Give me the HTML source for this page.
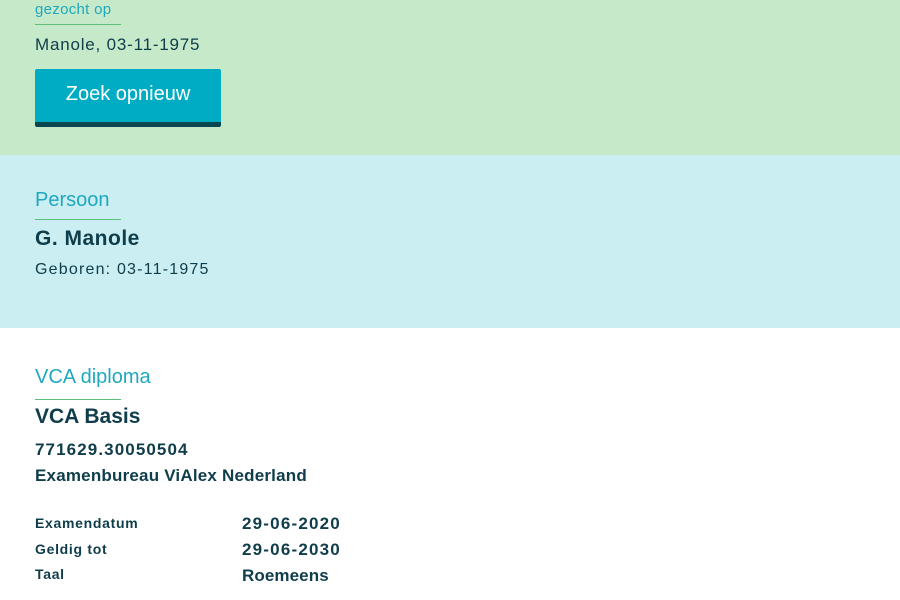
<!DOCTYPE html>
<html><head><style>
body{margin:0;width:900px;height:600px;overflow:hidden;font-family:"Liberation Sans",sans-serif;color:#0f3d4a;}
.s{position:absolute;left:0;width:900px}
.t{position:absolute;left:35px;white-space:nowrap}
.lab{color:#1fa8be;}
.line{position:absolute;left:35px;width:86px;height:1px;background:#5cc07a}
</style></head><body>
<div class="s" style="top:0;height:155px;background:#c6e9c9"></div>
<div class="s" style="top:155px;height:173px;background:#caeef2"></div>
<div class="s" style="top:328px;height:272px;background:#fff"></div>

<div class="t lab" style="top:1px;font-size:15px;letter-spacing:0.3px">gezocht op</div>
<div class="line" style="top:24px"></div>
<div class="t" style="top:35px;font-size:17px;letter-spacing:0.8px">Manole, 03-11-1975</div>
<div style="position:absolute;left:35px;top:69px;width:186px;height:58px;background:#00acc4;border-bottom:5px solid #0a4650;border-radius:2px;box-sizing:border-box"></div>
<div class="t" style="left:35px;width:186px;text-align:center;top:83px;font-size:20px;color:#fff">Zoek opnieuw</div>

<div class="t lab" style="top:189px;font-size:20px">Persoon</div>
<div class="line" style="top:219px"></div>
<div class="t" style="top:227px;font-size:21px;font-weight:bold;letter-spacing:0.5px">G. Manole</div>
<div class="t" style="top:261px;font-size:16px;letter-spacing:1.2px">Geboren: 03-11-1975</div>

<div class="t lab" style="top:366px;font-size:20px">VCA diploma</div>
<div class="line" style="top:399px"></div>
<div class="t" style="top:405px;font-size:21px;font-weight:bold">VCA Basis</div>
<div class="t" style="top:440px;font-size:17px;font-weight:bold;letter-spacing:1.1px">771629.30050504</div>
<div class="t" style="top:466px;font-size:17px;font-weight:bold;letter-spacing:0.2px">Examenbureau ViAlex Nederland</div>
<div class="t" style="top:515px;font-size:14px;font-weight:bold;letter-spacing:0.7px">Examendatum</div>
<div class="t" style="top:541px;font-size:14px;font-weight:bold;letter-spacing:0.7px">Geldig tot</div>
<div class="t" style="top:566px;font-size:14px;font-weight:bold;letter-spacing:0.7px">Taal</div>
<div class="t" style="left:242px;top:514px;font-size:17px;font-weight:bold;letter-spacing:1.2px">29-06-2020</div>
<div class="t" style="left:242px;top:540px;font-size:17px;font-weight:bold;letter-spacing:1.2px">29-06-2030</div>
<div class="t" style="left:242px;top:566px;font-size:17px;font-weight:bold;letter-spacing:0.1px">Roemeens</div>
</body></html>
